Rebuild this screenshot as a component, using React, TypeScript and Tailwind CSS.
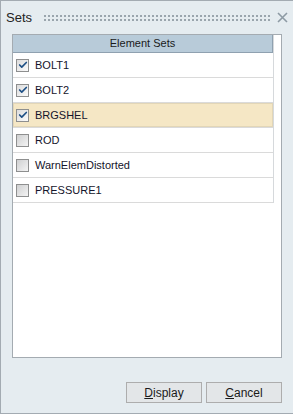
import { Check } from "lucide-react";

const sets = [
  { name: "BOLT1", checked: true },
  { name: "BOLT2", checked: true },
  { name: "BRGSHEL", checked: true, selected: true },
  { name: "ROD", checked: false },
  { name: "WarnElemDistorted", checked: false },
  { name: "PRESSURE1", checked: false },
];

function Box({ checked }: { checked: boolean }) {
  return (
    <div
      className={`w-[13px] h-[13px] border border-[#8e8f8f] flex items-center justify-center shrink-0 ${
        checked
          ? "bg-gradient-to-br from-[#dcdcdc] to-[#fbfbfb]"
          : "bg-gradient-to-br from-[#cfd0d1] to-[#f4f4f4]"
      }`}
    >
      {checked && <Check className="w-[10px] h-[10px] text-[#1d4f85]" strokeWidth={4} />}
    </div>
  );
}

function Grip() {
  return (
    <svg width="226" height="6" className="ml-[12px]">
      <defs>
        <pattern id="dots" width="4" height="4" patternUnits="userSpaceOnUse">
          <rect x="0" y="0" width="2" height="2" fill="#9aa5ad" />
        </pattern>
      </defs>
      <rect x="0" y="0" width="226" height="6" fill="url(#dots)" />
    </svg>
  );
}

export default function App() {
  return (
    <div
      className="w-[293px] h-[414px] bg-[#e5ecf0] border-l border-t border-b border-[#a3abb2] flex flex-col text-[#1a1a1a]"
      style={{ fontFamily: '"Liberation Sans", Arial, sans-serif' }}
    >
      <div className="h-[33px] flex items-center pl-[5px] shrink-0">
        <span className="text-[13px] leading-none text-[#222]">Sets</span>
        <Grip />
        <svg width="11" height="11" viewBox="0 0 11 11" className="ml-[7px] mt-[-1px]">
          <path d="M1 1 L10 10 M10 1 L1 10" stroke="#8d9aa4" strokeWidth="1.6" />
        </svg>
      </div>

      <div className="ml-[11px] w-[270px] h-[324px] border border-[#a4abb1] bg-white flex flex-col">
        <div className="w-[261px] border-r border-[#d6d9dc] flex flex-col">
          <div className="h-[18px] bg-[#b8cbd9] border-b border-r border-[#8fa1b0] flex items-center justify-center text-[11px]">
            Element Sets
          </div>
          {sets.map((s) => (
            <div
              key={s.name}
              className={`h-[25px] flex items-center pl-[3px] gap-[6px] border-b border-[#dadada] text-[11px] ${
                s.selected ? "bg-[#f5e7c5] shadow-[inset_0_0_0_1px_#e2d6b7]" : ""
              }`}
            >
              <Box checked={s.checked} />
              <span className="text-[#14142b]">{s.name}</span>
            </div>
          ))}
        </div>
      </div>

      <div className="flex-1 flex items-end justify-end gap-[4px] pr-[11px] pb-[10px]">
        <button className="w-[76px] h-[21px] bg-[#e3e6e8] border border-[#adadad] text-[12px] text-[#1a1a1a]">
          <span className="underline">D</span>isplay
        </button>
        <button className="w-[76px] h-[21px] bg-[#e3e6e8] border border-[#adadad] text-[12px] text-[#1a1a1a]">
          <span className="underline">C</span>ancel
        </button>
      </div>
    </div>
  );
}
